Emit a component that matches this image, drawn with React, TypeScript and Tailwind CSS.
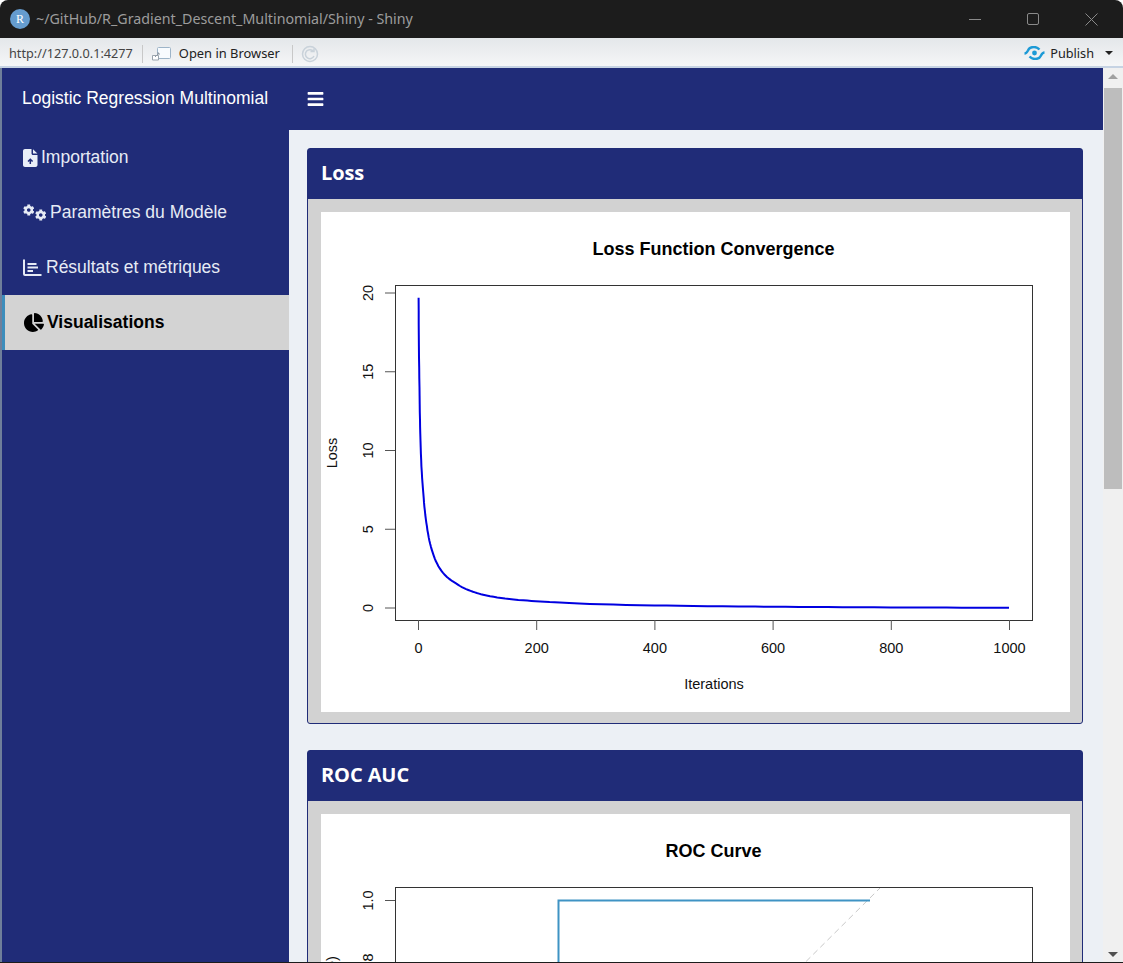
import React from 'react';
import { FaBars, FaChartPie, FaCog } from 'react-icons/fa';

// loss values digitised from the reference, interpolated in log-log so the line stays smooth
const lossTable: [number, number][] = [
  [1, 19.7], [2.5, 14], [4.5, 10.2], [9, 7.3], [15, 5.2], [25, 3.5], [42, 2.25], [65, 1.55],
  [93, 1.03], [122, 0.75], [178, 0.49], [240, 0.345], [400, 0.165], [600, 0.08], [800, 0.04], [1000, 0.015],
];

const lossPoints = () => {
  const pts: string[] = [];
  for (let s = 0; s < lossTable.length - 1; s++) {
    const [i0, l0] = lossTable[s];
    const [i1, l1] = lossTable[s + 1];
    for (let t = 0; t < 8; t++) {
      const f = t / 8;
      const i = i0 * Math.pow(i1 / i0, f);
      const loss = l0 * Math.pow(l1 / l0, f);
      pts.push(`${(97 + i * 0.591).toFixed(1)},${(396 - loss * 15.75).toFixed(1)}`);
    }
  }
  pts.push(`${(97 + 591).toFixed(1)},${(396 - 0.015 * 15.75).toFixed(1)}`);
  return pts.join(' ');
};

const axisText = 'Liberation Sans, Arial, sans-serif';

const LossPlot: React.FC = () => (
  <svg width="749" height="500" viewBox="0 0 749 500" className="block">
    <g fontFamily={axisText} fill="#111">
      <text x="392.5" y="43" textAnchor="middle" fontSize="18" fontWeight="700" fill="#000">Loss Function Convergence</text>
      <rect x="74.5" y="73.5" width="637" height="335" fill="none" stroke="#333" strokeWidth="1" />
      {[0, 200, 400, 600, 800, 1000].map((v) => {
        const x = 97.5 + v * 0.591;
        return (
          <g key={v}>
            <line x1={x} x2={x} y1="408" y2="418" stroke="#555" />
            <text x={x} y="441" textAnchor="middle" fontSize="14.5">{v}</text>
          </g>
        );
      })}
      {[0, 5, 10, 15, 20].map((v) => {
        const y = 396 - v * 15.75;
        return (
          <g key={v}>
            <line x1="64" x2="74" y1={y} y2={y} stroke="#555" />
            <text transform={`translate(52 ${y}) rotate(-90)`} textAnchor="middle" fontSize="14.5">{v}</text>
          </g>
        );
      })}
      <text x="393" y="477" textAnchor="middle" fontSize="14.5">Iterations</text>
      <text transform="translate(16 241) rotate(-90)" textAnchor="middle" fontSize="14.5">Loss</text>
      <polyline points={lossPoints()} fill="none" stroke="#0000e0" strokeWidth="2" strokeLinejoin="round" />
    </g>
  </svg>
);

const RocPlot: React.FC = () => (
  <svg width="749" height="500" viewBox="0 0 749 500" className="block">
    <g fontFamily={axisText} fill="#111">
      <text x="392.5" y="43" textAnchor="middle" fontSize="18" fontWeight="700" fill="#000">ROC Curve</text>
      <rect x="74.5" y="73.5" width="637" height="335" fill="none" stroke="#333" strokeWidth="1" />
      <line x1="400" y1="232" x2="559" y2="74" stroke="#c8c8c8" strokeWidth="1" strokeDasharray="6 4" />
      <polyline points="237.5,300 237.5,86.5 549,86.5" fill="none" stroke="#3f93c4" strokeWidth="2" />
      <line x1="64" x2="74" y1="86.5" y2="86.5" stroke="#555" />
      <line x1="64" x2="74" y1="149.5" y2="149.5" stroke="#555" />
      <text transform="translate(52 86.5) rotate(-90)" textAnchor="middle" fontSize="14.5">1.0</text>
      <text transform="translate(52 149.5) rotate(-90)" textAnchor="middle" fontSize="14.5">0.8</text>
      <text transform="translate(16 241) rotate(-90)" textAnchor="middle" fontSize="14.5">Sensitivity (True Positive Rate)</text>
    </g>
  </svg>
);

const PublishIcon: React.FC = () => (
  <svg width="21" height="14" viewBox="0 0 21 14" fill="none" stroke="#1c9ad6" strokeWidth="2.4">
    <path d="M0.5 7.5 C2 7.5 3 6.5 4 4.5 C5 2 7.5 1 10 1 C12.5 1 14 2 15.5 3.5" />
    <path d="M20.5 6.5 C19 6.5 18 7.5 17 9.5 C16 12 13.5 13 11 13 C8.5 13 7 12 5.5 10.5" />
    <circle cx="10.5" cy="7" r="2.4" fill="#1c9ad6" stroke="none" />
  </svg>
);

// rounded file with a small arrow in its lower half
const FileUpIcon: React.FC = () => (
  <svg width="15" height="18" viewBox="0 0 15 18">
    <path d="M2 0H8.5V4.5C8.5 5.3 9.2 6 10 6H14.5V16C14.5 17.1 13.6 18 12.5 18H2C0.9 18 0 17.1 0 16V2C0 0.9 0.9 0 2 0Z" fill="#e9eef8" />
    <path d="M10 0.2L14.4 4.6H10.4C10.2 4.6 10 4.4 10 4.2Z" fill="#e9eef8" />
    <path d="M7.3 15V10.5M5 12.5L7.3 10.2L9.6 12.5" fill="none" stroke="#202c78" strokeWidth="1.5" />
  </svg>
);

// two small gears, top-left and bottom-right
const GearsIcon: React.FC = () => (
  <div className="flex h-[17px] w-[23px] justify-between">
    <FaCog className="h-[12px] w-[12px] self-start" />
    <FaCog className="h-[12px] w-[12px] self-end" />
  </div>
);

const AxisBarsIcon: React.FC = () => (
  <svg width="19" height="17" viewBox="0 0 19 17" fill="none" stroke="currentColor" strokeWidth="2">
    <path d="M1 0.5V15C1 15.6 1.4 16 2 16H18.5" />
    <path d="M4.5 5H13.5M4.5 8.5H15M4.5 12H10" strokeWidth="1.9" />
  </svg>
);

const Card: React.FC<{ title: string; children: React.ReactNode }> = ({ title, children }) => (
  <div className="mb-[26px] rounded-[3px] border border-[#202c78] bg-[#d2d2d2]">
    <div className="flex h-[50px] items-center bg-[#202c78] pb-[2px] pl-[13px] font-['Open_Sans',sans-serif] text-[20px] font-bold tracking-[-0.1px] text-white">
      {title}
    </div>
    <div className="pt-[13px] pr-[12px] pb-[11px] pl-[13px]">
      <div className="bg-white">{children}</div>
    </div>
  </div>
);

const navItems = [
  { label: 'Importation', icon: <FileUpIcon />, gap: 'gap-[3px]' },
  { label: 'Paramètres du Modèle', icon: <GearsIcon />, gap: 'gap-[4px]' },
  { label: 'Résultats et métriques', icon: <AxisBarsIcon />, gap: 'gap-[4px]' },
];

export default function App() {
  return (
    <div className="flex h-[963px] w-[1123px] flex-col overflow-hidden rounded-t-lg bg-[#1c1c1c] pb-px font-['Liberation_Sans',Arial,sans-serif]">
      {/* Window title bar */}
      <div className="flex h-[38px] shrink-0 items-center pl-[10px] text-[#9c9c9c]">
        <div className="flex h-5 w-5 items-center justify-center rounded-full bg-[#659ccf] font-['Liberation_Serif',serif] text-[12px] text-white">R</div>
        <span className="ml-[6px] font-['Noto_Sans',sans-serif] text-[14.25px]">~/GitHub/R_Gradient_Descent_Multinomial/Shiny - Shiny</span>
        <div className="ml-auto flex items-center gap-[46px] pr-[25px] text-[#8a8a8a]">
          <svg width="12" height="13" viewBox="0 0 12 13" stroke="currentColor" fill="none"><path d="M0 6.5H12" /></svg>
          <svg width="12" height="12" viewBox="0 0 12 12" stroke="currentColor" fill="none"><rect x="0.5" y="0.5" width="11" height="11" rx="1.5" /></svg>
          <svg width="13" height="13" viewBox="0 0 13 13" stroke="currentColor" fill="none"><path d="M0.5 0.5L12.5 12.5M12.5 0.5L0.5 12.5" /></svg>
        </div>
      </div>

      {/* RStudio viewer toolbar */}
      <div className="flex h-[28px] shrink-0 items-center bg-gradient-to-b from-[#e4e7ea] to-[#f5f6f7] pt-[3px] pl-[9px] font-['Noto_Sans',sans-serif] text-[12.7px] text-[#222]">
        <span className="text-[#444]">http://127.0.0.1:4277</span>
        <div className="ml-[9px] h-[18px] w-px bg-[#c8c8c8]" />
        <svg className="ml-[9px]" width="19" height="15" viewBox="0 0 19 15" fill="none">
          <rect x="5.5" y="1.5" width="13" height="11" rx="1" fill="#f8fbfe" stroke="#9db4c8" />
          <path d="M0.5 9.5H6.5V14H0.5Z" fill="#fff" stroke="#9aa4ad" />
          <path d="M3 11L7 7M5 7H7V9" stroke="#8f99a3" />
        </svg>
        <span className="ml-[8px] text-[12.9px]">Open in Browser</span>
        <div className="ml-[12px] h-[18px] w-px bg-[#c8c8c8]" />
        <svg className="ml-[8px]" width="18" height="18" viewBox="0 0 18 18" fill="none" stroke="#c9d2da" strokeWidth="1.5">
          <circle cx="9" cy="9" r="7.5" />
          <path d="M12.5 6.5A4.5 4.5 0 1 0 13 11" />
          <path d="M9.5 6.5H13V3.5" />
        </svg>
        <div className="ml-auto flex items-center pr-[10px]">
          <PublishIcon />
          <span className="ml-[5px]">Publish</span>
          <div className="ml-[11px] h-0 w-0 border-x-[4px] border-t-[4px] border-x-transparent border-t-[#222]" />
        </div>
      </div>
      <div className="h-[2px] shrink-0 bg-[#c6d3e3]" />

      {/* Shiny dashboard */}
      <div className="flex min-h-0 flex-1 bg-[#6f7f9a] pl-[2px]">
        <aside className="w-[287px] shrink-0 bg-[#202c78] text-[17.5px] text-[#e6ebf5]">
          <div className="flex h-[62px] items-center pb-[2px] pl-[20px] text-white">Logistic Regression Multinomial</div>
          <nav>
            {navItems.map((item) => (
              <div key={item.label} className={`flex h-[55px] items-center pl-[21px] ${item.gap}`}>
                {item.icon}
                <span>{item.label}</span>
              </div>
            ))}
            <div className="flex h-[55px] items-center gap-[3px] border-l-[3px] border-[#3c8dbc] bg-[#d3d3d3] pl-[19px] font-bold text-black">
              <FaChartPie className="h-[19px] w-[20px]" />
              <span>Visualisations</span>
            </div>
          </nav>
        </aside>

        <div className="flex min-w-0 flex-1 flex-col">
          <header className="flex h-[62px] shrink-0 items-center bg-[#202c78] pb-[1px] pl-[18px] text-white">
            <FaBars className="h-[18px] w-[17px]" />
          </header>
          <main className="min-h-0 flex-1 overflow-hidden bg-[#ecf0f5] pt-[18px] pr-[20px] pl-[18px]">
            <Card title="Loss"><LossPlot /></Card>
            <Card title="ROC AUC"><RocPlot /></Card>
          </main>
        </div>

        {/* Scrollbar */}
        <div className="flex w-[20px] shrink-0 flex-col items-center bg-[#f0f0f0]">
          <div className="mt-[6px] h-0 w-0 border-x-[5px] border-b-[5px] border-x-transparent border-b-[#a0a0a0]" />
          <div className="mt-[9px] h-[401px] w-[18px] bg-[#bdbdbd]" />
          <div className="mt-auto mb-[5px] h-0 w-0 border-x-[5px] border-t-[5px] border-x-transparent border-t-[#505050]" />
        </div>
      </div>
    </div>
  );
}
